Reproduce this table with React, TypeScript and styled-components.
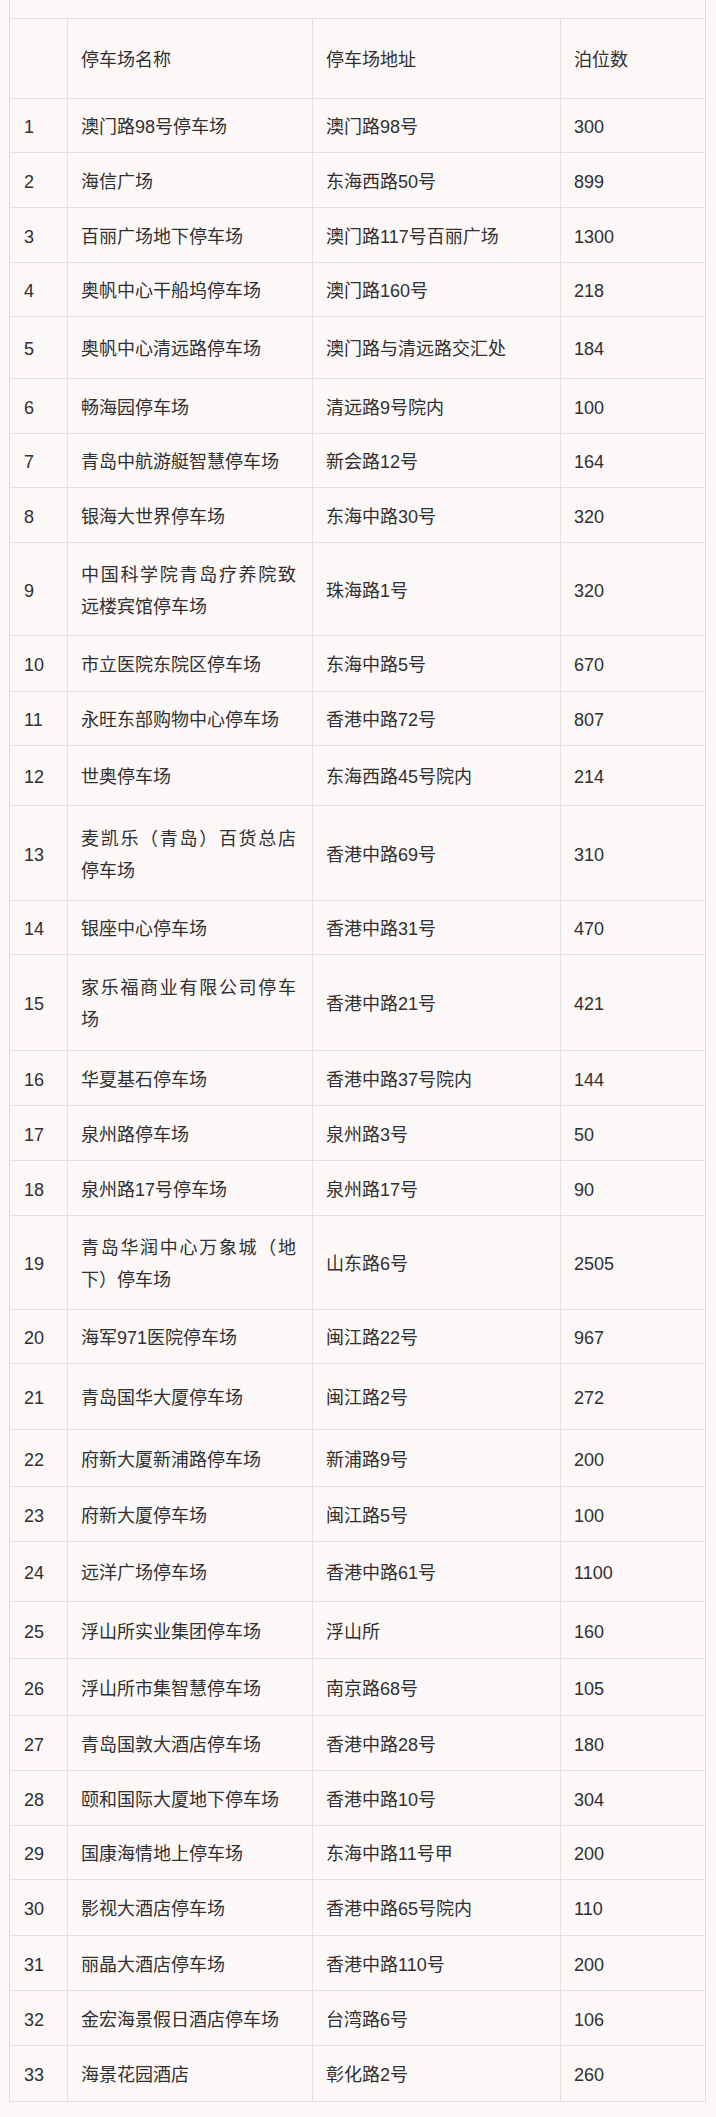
import React from "react";
import styled, { createGlobalStyle } from "styled-components";

const GlobalStyle = createGlobalStyle`
  html, body {
    margin: 0;
    padding: 0;
    background: #fcf8f7;
  }
  body {
    font-family: "Liberation Sans", "Noto Sans CJK SC", sans-serif;
    color: #303030;
  }
`;

const Page = styled.div`
  width: 716px;
  min-height: 2117px;
  box-sizing: border-box;
  padding: 0 10px 16px 9px;
  background: #fcf8f7;
`;

const Table = styled.div`
  display: flex;
  flex-direction: column;
  border-left: 1px solid #e2dedd;
  border-right: 1px solid #e2dedd;
  width: 697px;
  box-sizing: border-box;
`;

const Caption = styled.div`
  height: 19px;
  box-sizing: border-box;
  border-bottom: 1px solid #e4e0df;
`;

const Row = styled.div<{ $h: number }>`
  display: grid;
  grid-template-columns: 58px 245px 248px 1fr;
  height: ${(p) => p.$h}px;
  box-sizing: border-box;
  border-bottom: 1px solid #e4e0df;
`;

const Cell = styled.div<{ $first?: boolean; $last?: boolean }>`
  display: flex;
  align-items: center;
  box-sizing: border-box;
  border-right: ${(p) => (p.$last ? "none" : "1px solid #e4e0df")};
  padding: 3px ${(p) => (p.$first ? "4px" : "16px")} 0
    ${(p) => (p.$first ? "14px" : "13px")};
  font-size: 18px;
  line-height: 32px;
  color: #303030;
  min-width: 0;
`;

const CellText = styled.span`
  display: block;
  flex: 1;
  text-align: justify;
  word-break: normal;
`;

type Item = [string, string, string];

const items: Item[] = [
  ["澳门路98号停车场", "澳门路98号", "300"],
  ["海信广场", "东海西路50号", "899"],
  ["百丽广场地下停车场", "澳门路117号百丽广场", "1300"],
  ["奥帆中心干船坞停车场", "澳门路160号", "218"],
  ["奥帆中心清远路停车场", "澳门路与清远路交汇处", "184"],
  ["畅海园停车场", "清远路9号院内", "100"],
  ["青岛中航游艇智慧停车场", "新会路12号", "164"],
  ["银海大世界停车场", "东海中路30号", "320"],
  ["中国科学院青岛疗养院致远楼宾馆停车场", "珠海路1号", "320"],
  ["市立医院东院区停车场", "东海中路5号", "670"],
  ["永旺东部购物中心停车场", "香港中路72号", "807"],
  ["世奥停车场", "东海西路45号院内", "214"],
  ["麦凯乐（青岛）百货总店停车场", "香港中路69号", "310"],
  ["银座中心停车场", "香港中路31号", "470"],
  ["家乐福商业有限公司停车场", "香港中路21号", "421"],
  ["华夏基石停车场", "香港中路37号院内", "144"],
  ["泉州路停车场", "泉州路3号", "50"],
  ["泉州路17号停车场", "泉州路17号", "90"],
  ["青岛华润中心万象城（地下）停车场", "山东路6号", "2505"],
  ["海军971医院停车场", "闽江路22号", "967"],
  ["青岛国华大厦停车场", "闽江路2号", "272"],
  ["府新大厦新浦路停车场", "新浦路9号", "200"],
  ["府新大厦停车场", "闽江路5号", "100"],
  ["远洋广场停车场", "香港中路61号", "1100"],
  ["浮山所实业集团停车场", "浮山所", "160"],
  ["浮山所市集智慧停车场", "南京路68号", "105"],
  ["青岛国敦大酒店停车场", "香港中路28号", "180"],
  ["颐和国际大厦地下停车场", "香港中路10号", "304"],
  ["国康海情地上停车场", "东海中路11号甲", "200"],
  ["影视大酒店停车场", "香港中路65号院内", "110"],
  ["丽晶大酒店停车场", "香港中路110号", "200"],
  ["金宏海景假日酒店停车场", "台湾路6号", "106"],
  ["海景花园酒店", "彰化路2号", "260"],
];

// y positions of the horizontal rules (header top ... table bottom)
const lines = [
  18, 98, 152, 207, 262, 316, 378, 433, 487, 542, 635, 691, 745, 805, 900,
  954, 1050, 1105, 1160, 1215, 1309, 1363, 1429, 1486, 1541, 1601, 1658, 1715,
  1770, 1825, 1879, 1935, 1990, 2045, 2101,
];

const heightOf = (i: number) => lines[i + 1] - lines[i];

export default function App() {
  return (
    <>
      <GlobalStyle />
      <Page>
        <Table>
          <Caption />
          <Row $h={heightOf(0)}>
            <Cell $first />
            <Cell>
              <CellText>停车场名称</CellText>
            </Cell>
            <Cell>
              <CellText>停车场地址</CellText>
            </Cell>
            <Cell $last>
              <CellText>泊位数</CellText>
            </Cell>
          </Row>
          {items.map(([name, addr, count], i) => (
            <Row key={i} $h={heightOf(i + 1)}>
              <Cell $first>
                <CellText>{i + 1}</CellText>
              </Cell>
              <Cell>
                <CellText>{name}</CellText>
              </Cell>
              <Cell>
                <CellText>{addr}</CellText>
              </Cell>
              <Cell $last>
                <CellText>{count}</CellText>
              </Cell>
            </Row>
          ))}
        </Table>
      </Page>
    </>
  );
}
